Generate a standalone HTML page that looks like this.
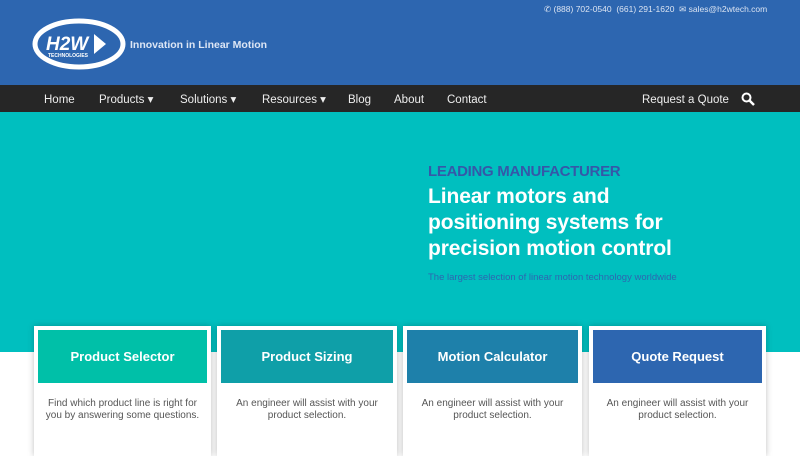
<!DOCTYPE html>
<html><head><meta charset="utf-8"><style>
*{margin:0;padding:0;box-sizing:border-box}
body{width:800px;height:450px;overflow:hidden;font-family:"Liberation Sans",sans-serif;background:#fff;position:relative}
.top{position:absolute;left:0;top:0;width:800px;height:85px;background:#2d66b0}
.nav{position:absolute;left:0;top:85px;width:800px;height:27px;background:#262626;color:#eee;font-size:11.5px}
.nav span{position:absolute;top:9px;line-height:13px;height:13px;white-space:nowrap}
.hero{position:absolute;left:0;top:112px;width:800px;height:240px;background:#00bfbf}
.abs{position:absolute}
.card{position:absolute;top:326px;height:130px;background:#fff;box-shadow:0 0 6px rgba(0,0,0,.25);padding:4px}
.card .h{height:53px;color:#fff;font-weight:bold;font-size:13px;text-align:center;line-height:53px}
.card p{font-size:10px;color:#555;text-align:center;margin-top:15px;line-height:12px;padding:0 6px}
</style></head><body>
<div class="top"></div>
<svg class="abs" style="left:32px;top:18px" width="96" height="52" viewBox="0 0 96 52">
<ellipse cx="47" cy="26" rx="44" ry="23" fill="none" stroke="#fff" stroke-width="5"/>
<text x="14" y="32" font-family="Liberation Sans" font-weight="bold" font-size="19" fill="#fff" font-style="italic">H2W</text>
<polygon points="62,16 74,26 62,36" fill="#fff"/>
<text x="16" y="39" font-family="Liberation Sans" font-weight="bold" font-size="5" fill="#fff">TECHNOLOGIES</text>
</svg>
<div class="abs" style="left:130px;top:39px;color:#dde6f5;font-weight:bold;font-size:10.5px">Innovation in Linear Motion</div>
<div class="abs" style="left:544px;top:4px;color:#dbe4f2;font-size:8.5px;line-height:11px">&#9990; (888) 702-0540 &nbsp;(661) 291-1620 &nbsp;&#9993; sales@h2wtech.com</div>
<div class="nav">
<span style="left:44px">Home</span><span style="left:99px">Products &#9662;</span><span style="left:180px">Solutions &#9662;</span><span style="left:262px">Resources &#9662;</span><span style="left:348px">Blog</span><span style="left:394px">About</span><span style="left:447px">Contact</span><span style="left:642px">Request a Quote</span>
<svg class="abs" style="left:741px;top:7px" width="14" height="14" viewBox="0 0 14 14"><circle cx="5.5" cy="5.5" r="4" fill="none" stroke="#fff" stroke-width="2"/><line x1="8.5" y1="8.5" x2="13" y2="13" stroke="#fff" stroke-width="2.5"/></svg>
</div>
<div class="hero"></div>
<div class="abs" style="left:428px;top:163px;color:#3558a8;font-weight:bold;font-size:15px;letter-spacing:-0.3px">LEADING MANUFACTURER</div>
<div class="abs" style="left:428px;top:184px;color:#fff;font-weight:bold;font-size:21px;line-height:26px;width:300px;letter-spacing:-0.1px">Linear motors and<br>positioning systems for<br>precision motion control</div>
<div class="abs" style="left:428px;top:272px;color:#2d66b0;font-size:9.5px">The largest selection of linear motion technology worldwide</div>
<div class="card" style="left:34px;width:177px"><div class="h" style="background:#00c0a8">Product Selector</div><p>Find which product line is right for you by answering some questions.</p></div>
<div class="card" style="left:217px;width:180px"><div class="h" style="background:#0f9fa8">Product Sizing</div><p>An engineer will assist with your product selection.</p></div>
<div class="card" style="left:403px;width:179px"><div class="h" style="background:#1e80aa">Motion Calculator</div><p>An engineer will assist with your product selection.</p></div>
<div class="card" style="left:589px;width:177px"><div class="h" style="background:#2d66b0">Quote Request</div><p>An engineer will assist with your product selection.</p></div>
</body></html>
